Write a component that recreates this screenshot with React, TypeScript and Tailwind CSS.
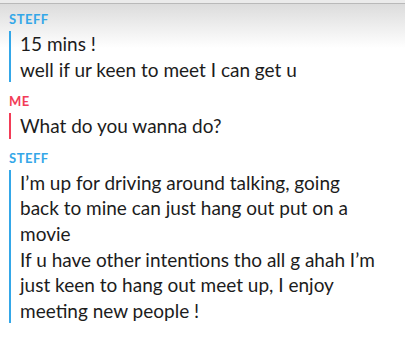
import React from 'react';

type Msg = { from: 'STEFF' | 'ME'; lines: string[] };

const messages: Msg[] = [
  { from: 'STEFF', lines: ['15 mins !', 'well if ur keen to meet I can get u'] },
  { from: 'ME', lines: ['What do you wanna do?'] },
  {
    from: 'STEFF',
    lines: [
      'I’m up for driving around talking, going',
      'back to mine can just hang out put on a',
      'movie',
      'If u have other intentions tho all g ahah I’m',
      'just keen to hang out meet up, I enjoy',
      'meeting new people !',
    ],
  },
];

const App = () => {
  return (
    <div
      className="w-[405px] h-[337px] overflow-hidden px-[9px] pt-[11px] bg-[linear-gradient(to_bottom,#ebebeb_0px,#ebebeb_3px,#b9b9b9_3px,#b9b9b9_4px,#dcdcdc_4px,#ffffff_48px)]"
      style={{ fontFamily: 'Lato, "Noto Sans", sans-serif' }}
    >
      {messages.map((m, i) => {
        const isMe = m.from === 'ME';
        return (
          <div key={i} className="mb-[11px]">
            <div
              className={`text-[13px] leading-[16px] font-bold tracking-[0.5px] ${
                isMe ? 'text-[#f23c57]' : 'text-[#34a7e8]'
              }`}
            >
              {m.from}
            </div>
            <div
              className={`mt-[4px] border-l-[2px] pl-[9px] text-[19px] leading-[25.6px] text-[#1c1c1c] ${
                isMe ? 'border-[#f23c57]' : 'border-[#34a7e8]'
              }`}
            >
              {m.lines.map((l, j) => (
                <div key={j} className="whitespace-nowrap">
                  {l}
                </div>
              ))}
            </div>
          </div>
        );
      })}
    </div>
  );
};

export default App;
